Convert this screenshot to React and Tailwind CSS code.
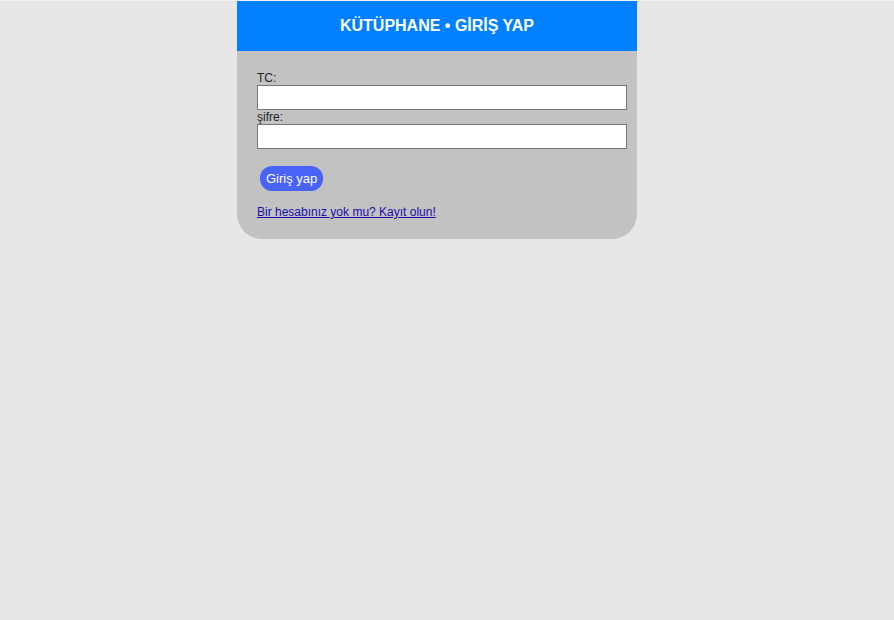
import React from 'react';

export default function App() {
  return (
    <div className="min-h-[620px] bg-[#e7e7e7] border-t border-[#f2f2f2] pr-[20px] font-['Liberation_Sans',Arial,sans-serif]">
      <div className="w-[400px] mx-auto bg-[#c2c2c2] rounded-b-[25px]">
        {/* header */}
        <div className="h-[50px] bg-[#0080ff] flex items-center justify-center">
          <h1 className="text-white text-[16px] font-bold">KÜTÜPHANE • GİRİŞ YAP</h1>
        </div>

        <form className="px-5 pt-[20px] pb-[20px] text-[12px] text-[#222]" onSubmit={(e) => e.preventDefault()}>
          <label className="block leading-[14px]">TC:</label>
          <input type="text" className="block w-[370px] h-[25px] bg-white border border-[#767676] outline-none" />
          <label className="block leading-[14px]">şifre:</label>
          <input type="password" className="block w-[370px] h-[25px] bg-white border border-[#767676] outline-none" />

          <button className="mt-[17px] ml-[3px] h-[25px] px-[6px] rounded-[12px] bg-[#4a63f7] text-white text-[13px] font-medium leading-[25px]">
            Giriş yap
          </button>

          <div className="mt-[14px] leading-[14px]">
            <a href="#" className="text-[#1a0dab] underline">Bir hesabınız yok mu? Kayıt olun!</a>
          </div>
        </form>
      </div>
    </div>
  );
}
